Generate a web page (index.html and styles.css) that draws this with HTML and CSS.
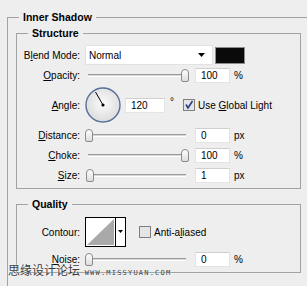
FILE: index.html
```html
<!DOCTYPE html>
<html lang="en">
<head>
    <meta charset="UTF-8">
    <title>Inner Shadow</title>
    <link rel="stylesheet" href="styles.css">
</head>
<body>

    <div class="panel">
        <fieldset class="group outer">
            <legend class="title">Inner Shadow</legend>

            <fieldset class="group inner">
                <legend class="title">Structure</legend>

                <div class="row row-blend">
                    <span class="label">B<u>l</u>end Mode:</span>
                    <div class="select">
                        <span>Normal</span>
                        <svg width="7" height="4" viewBox="0 0 7 4"><polygon points="0,0 7,0 3.5,4" fill="#000"/></svg>
                    </div>
                    <div class="swatch"></div>
                </div>

                <div class="row">
                    <span class="label"><u>O</u>pacity:</span>
                    <div class="slider slider-full"><div class="thumb"></div></div>
                    <input class="field" type="text" value="100">
                    <span class="unit">%</span>
                </div>

                <div class="row row-angle">
                    <span class="label"><u>A</u>ngle:</span>
                    <svg class="dial" width="36" height="36" viewBox="0 0 36 36">
                        <defs>
                            <radialGradient id="dialFill" cx="50%" cy="45%" r="55%">
                                <stop offset="0" stop-color="#fbfbfb"/>
                                <stop offset="1" stop-color="#dcdcdc"/>
                            </radialGradient>
                        </defs>
                        <circle cx="18" cy="18" r="17" fill="url(#dialFill)" stroke="#56709a" stroke-width="1.4"/>
                        <line x1="18" y1="18" x2="10.5" y2="5" stroke="#000" stroke-width="1"/>
                        <circle cx="18" cy="18" r="1.6" fill="#000"/>
                    </svg>
                    <input class="field field-angle" type="text" value="120">
                    <span class="unit unit-deg">°</span>
                    <svg class="check" width="12" height="12" viewBox="0 0 12 12">
                        <rect x="0.5" y="0.5" width="11" height="11" fill="#e4e4e4" stroke="#808080"/>
                        <path d="M3 5.5 L5 9 L9.5 2" stroke="#27408b" stroke-width="1.6" fill="none"/>
                    </svg>
                    <span class="check-text">Use <u>G</u>lobal Light</span>
                </div>

                <div class="row">
                    <span class="label"><u>D</u>istance:</span>
                    <div class="slider"><div class="thumb"></div></div>
                    <input class="field" type="text" value="0">
                    <span class="unit">px</span>
                </div>

                <div class="row">
                    <span class="label"><u>C</u>hoke:</span>
                    <div class="slider slider-full"><div class="thumb"></div></div>
                    <input class="field" type="text" value="100">
                    <span class="unit">%</span>
                </div>

                <div class="row">
                    <span class="label"><u>S</u>ize:</span>
                    <div class="slider slider-low"><div class="thumb"></div></div>
                    <input class="field" type="text" value="1">
                    <span class="unit">px</span>
                </div>
            </fieldset>

            <fieldset class="group inner quality">
                <legend class="title">Quality</legend>

                <div class="row row-contour">
                    <span class="label">Contour:</span>
                    <svg class="contour" width="41" height="30" viewBox="0 0 41 30">
                        <rect x="0.5" y="0.5" width="40" height="29" fill="#fff" stroke="#000"/>
                        <polygon points="2,28 29,2 29,28" fill="#a9a9a9"/>
                        <line x1="30.5" y1="0" x2="30.5" y2="30" stroke="#000"/>
                        <polygon points="33,13 38,13 35.5,16" fill="#000"/>
                    </svg>
                    <svg class="check check-off" width="12" height="12" viewBox="0 0 12 12">
                        <rect x="0.5" y="0.5" width="11" height="11" fill="#e4e4e4" stroke="#808080"/>
                    </svg>
                    <span class="check-text">Anti-a<u>l</u>iased</span>
                </div>

                <div class="row">
                    <span class="label"><u>N</u>oise:</span>
                    <div class="slider"><div class="thumb"></div></div>
                    <input class="field" type="text" value="0">
                    <span class="unit">%</span>
                </div>
            </fieldset>
        </fieldset>

        <div class="watermark">思缘设计论坛 <span class="site">WWW.MISSYUAN.COM</span></div>
    </div>

</body>
</html>
```

FILE: styles.css
```css
/* Global Styles */
body {
    margin: 0;
    background: #eeeeee;
    font-family: 'Liberation Sans', Arial, sans-serif;
    font-size: 10px;
    color: #000;
    overflow: hidden;
}

.panel {
    position: relative;
    width: 307px;
    height: 286px;
    padding: 11px 0 0 7px;
    box-sizing: border-box;
    overflow: hidden;
}

/* Group boxes */
.group {
    margin: 0;
    padding: 0;
    border: 1px solid #a3a3a3;
    min-width: 0;
}

.outer {
    height: 290px;
    margin-right: -10px;
    padding: 3px 0 0 8px;
    border-right: none;
}

.inner {
    width: 285px;
    box-sizing: border-box;
    padding: 0 0 5px 0;
}

.quality {
    margin-top: 9px;
}

.title {
    font-weight: bold;
    font-size: 10.5px;
    line-height: 13px;
    padding: 0 4px;
    margin-left: 11px;
}

.outer > .title {
    margin-left: 3px;
}

/* Rows */
.row {
    display: flex;
    align-items: center;
    height: 15px;
    margin-top: 5px;
}

.row-blend {
    height: 20px;
}

.row-angle {
    height: 36px;
    margin-top: 4px;
}

.row-contour {
    height: 30px;
    margin-top: 6px;
}

.row-blend + .row {
    margin-top: 3px;
}

.label {
    width: 63px;
    margin-right: 5px;
    text-align: right;
    white-space: nowrap;
}

/* Controls */
.select {
    width: 128px;
    height: 20px;
    box-sizing: border-box;
    display: flex;
    align-items: center;
    justify-content: space-between;
    padding: 0 7px 0 3px;
    background: #fff;
    border: 1px solid #e2e2e2;
}

.swatch {
    width: 30px;
    height: 17px;
    margin-left: 2px;
    box-sizing: border-box;
    background: #0a0a0a;
    border: 1px solid #8c8c8c;
}

.slider {
    width: 104px;
    height: 15px;
    display: flex;
    align-items: center;
    justify-content: flex-start;
    background: linear-gradient(#9c9c9c 0 1px, #d6d6d6 1px 2px, #fff 2px 3px) no-repeat center / 98px 3px;
}

.slider-full {
    justify-content: flex-end;
}

.slider-low {
    padding-left: 1px;
    box-sizing: border-box;
}

.thumb {
    width: 8px;
    height: 13px;
    box-sizing: border-box;
    border: 1px solid #8a8a8a;
    border-radius: 4px 4px 2px 2px;
    background: linear-gradient(#ffffff, #dcdcdc);
}

.field {
    width: 35px;
    height: 15px;
    box-sizing: border-box;
    margin: 0 0 0 6px;
    padding: 0 0 0 5px;
    border: 1px solid #e4e4e4;
    border-top-color: #cfcfcf;
    background: #fff;
    font: inherit;
    color: #000;
    outline: none;
}

.field-angle {
    width: 40px;
    margin-left: 4px;
}

.unit {
    margin-left: 4px;
}

.unit-deg {
    margin-left: 5px;
    align-self: flex-start;
    margin-top: 9px;
}

.dial {
    display: block;
}

.check {
    display: block;
    margin-left: 9px;
}

.check-off {
    margin-left: 13px;
}

.check-text {
    margin-left: 3px;
    white-space: nowrap;
}

.contour {
    display: block;
}

/* Watermark */
.watermark {
    position: absolute;
    left: 8px;
    top: 263px;
    font-family: 'Noto Sans CJK SC', sans-serif;
    font-size: 12px;
    line-height: 14px;
    color: #3c3c3c;
    text-shadow: 0 0 2px #fff;
    white-space: nowrap;
}

.site {
    font-family: 'DejaVu Sans Mono', monospace;
    font-size: 7px;
    letter-spacing: 1.2px;
    margin-left: 2px;
}
```
